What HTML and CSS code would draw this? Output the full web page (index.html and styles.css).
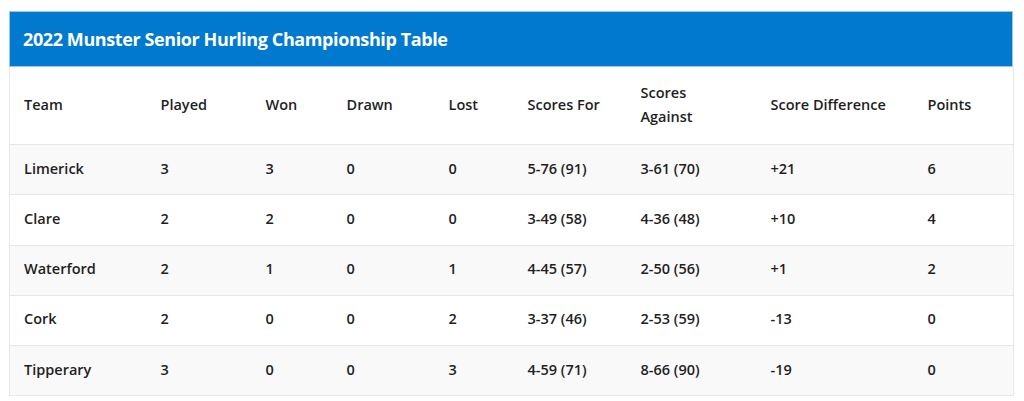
FILE: index.html
```html
<!DOCTYPE html>
<html lang="en">
<head>
<meta charset="utf-8">
<title>2022 Munster Senior Hurling Championship Table</title>
<link rel="stylesheet" href="styles.css">
</head>
<body>
<div class="wrap">
  <h2 class="caption">2022 Munster Senior Hurling Championship Table</h2>
  <table class="standings">
    <colgroup>
      <col class="c-team"><col class="c-played"><col class="c-won"><col class="c-drawn"><col class="c-lost"><col class="c-for"><col class="c-against"><col class="c-diff"><col class="c-pts">
    </colgroup>
    <thead>
      <tr><th>Team</th><th>Played</th><th>Won</th><th>Drawn</th><th>Lost</th><th>Scores For</th><th>Scores<br>Against</th><th>Score Difference</th><th>Points</th></tr>
    </thead>
    <tbody>
      <tr><td>Limerick</td><td>3</td><td>3</td><td>0</td><td>0</td><td>5-76 (91)</td><td>3-61 (70)</td><td>+21</td><td>6</td></tr>
      <tr><td>Clare</td><td>2</td><td>2</td><td>0</td><td>0</td><td>3-49 (58)</td><td>4-36 (48)</td><td>+10</td><td>4</td></tr>
      <tr><td>Waterford</td><td>2</td><td>1</td><td>0</td><td>1</td><td>4-45 (57)</td><td>2-50 (56)</td><td>+1</td><td>2</td></tr>
      <tr><td>Cork</td><td>2</td><td>0</td><td>0</td><td>2</td><td>3-37 (46)</td><td>2-53 (59)</td><td>-13</td><td>0</td></tr>
      <tr><td>Tipperary</td><td>3</td><td>0</td><td>0</td><td>3</td><td>4-59 (71)</td><td>8-66 (90)</td><td>-19</td><td>0</td></tr>
    </tbody>
  </table>
</div>
</body>
</html>
```
FILE: styles.css
```css
html, body {
  margin: 0;
  padding: 0;
  background: #ffffff;
}
body {
  font-family: "Open Sans", "Noto Sans", "Liberation Sans", sans-serif;
  color: #1f1f1f;
}
.wrap {
  padding: 11px 11px 0 9px;
  width: 1004px;
}
.caption {
  margin: 0;
  background: #0079cf;
  border: 1px solid #9cc6ea;
  color: #ffffff;
  font-size: 18px;
  font-weight: 700;
  letter-spacing: -0.4px;
  line-height: 24px;
  padding: 15px 13px 15px 13px;
}
.standings {
  width: 1004px;
  border-collapse: collapse;
  table-layout: fixed;
  border-left: 1px solid #e8e8e8;
  border-right: 1px solid #e8e8e8;
  border-bottom: 1px solid #e8e8e8;
  font-size: 14.5px;
  font-weight: 600;
}
.c-team { width: 137px; }
.c-played { width: 105px; }
.c-won { width: 81px; }
.c-drawn { width: 102px; }
.c-lost { width: 79px; }
.c-for { width: 113px; }
.c-against { width: 130px; }
.c-diff { width: 157px; }
.c-pts { width: 100px; }
.standings th,
.standings td {
  text-align: left;
  vertical-align: middle;
  padding: 11.5px 8px 13.75px 14px;
  line-height: 24px;
  font-weight: 600;
}
.standings th {
  padding-top: 14px;
  padding-bottom: 15px;
}
.standings tbody tr {
  border-top: 1px solid #e6e6e6;
}
.standings tbody tr:nth-child(odd) {
  background: #f9f9f9;
}
```
